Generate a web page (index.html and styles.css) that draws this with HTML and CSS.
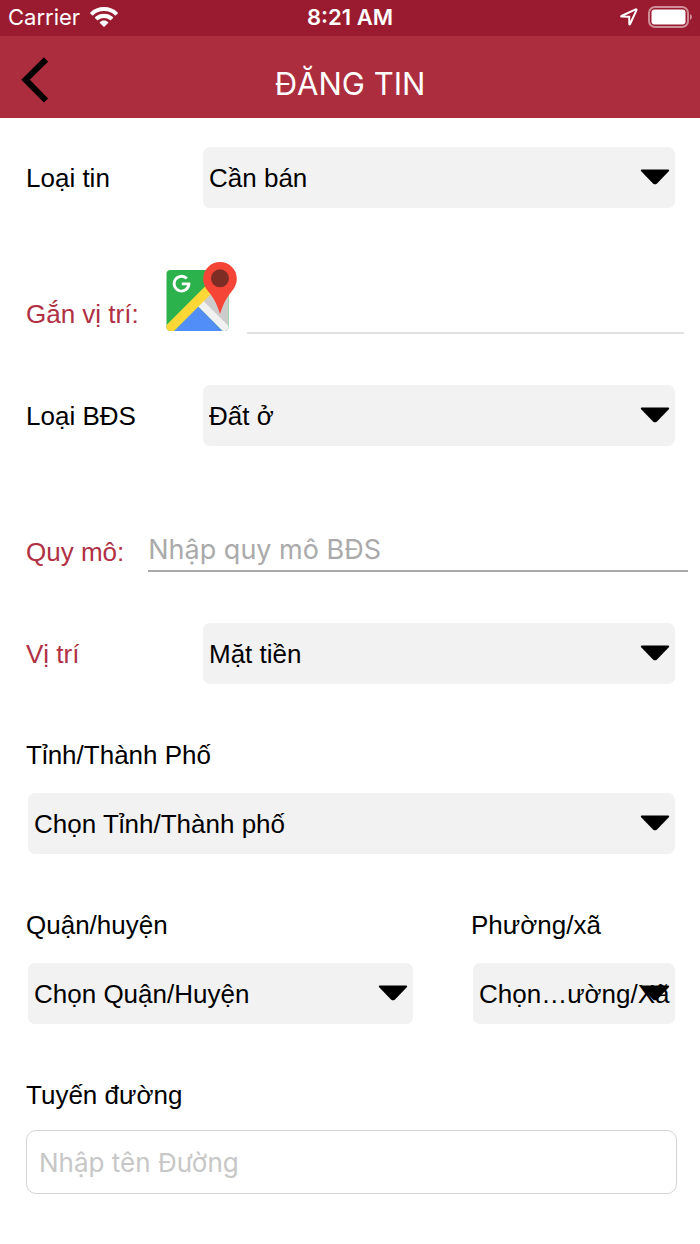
FILE: index.html
```html
<!DOCTYPE html>
<html lang="vi">
<head>
<meta charset="utf-8">
<meta name="viewport" content="width=device-width, initial-scale=1">
<title>Đăng tin</title>
<link rel="stylesheet" href="styles.css">
</head>
<body>
<svg class="defs" width="0" height="0" aria-hidden="true">
  <symbol id="caret" viewBox="0 0 30 16"><path d="M1.8 .5H28.2Q30 .8 28.6 2.6L17 14.4Q15 16.2 13 14.4L1.4 2.6Q0 .8 1.8 .5Z"/></symbol>
</svg>
<header>
  <div class="status">
    <div class="status-side">
      <span>Carrier</span>
      <svg class="wifi" viewBox="0 0 28 20" aria-hidden="true">
        <path d="M14 0C19.400 0 24.200 2 27.700 5.400Q28.200 6 27.700 6.500L25.900 8.200Q25.400 8.700 24.800 8.200C21.900 5.500 18.200 4.100 14 4.100S6.100 5.500 3.200 8.200Q2.600 8.700 2.100 8.200L.3 6.500Q-.2 6 .3 5.400C3.800 2 8.600 0 14 0Z"/>
        <path d="M14 6.800C17.400 6.800 20.500 8 22.900 10.100Q23.500 10.700 22.900 11.300L21 13.100Q20.500 13.500 19.900 13.100C18.300 11.700 16.300 10.900 14 10.900S9.700 11.700 8.100 13.100Q7.500 13.500 7 13.100L5.100 11.300Q4.500 10.700 5.100 10.100C7.500 8 10.600 6.800 14 6.800Z"/>
        <path d="M14 13.500C15.600 13.500 17 14.100 18.100 15Q18.600 15.500 18.100 16L14.600 19.400Q14 20 13.400 19.400L9.900 16Q9.400 15.500 9.900 15C11 14.100 12.400 13.500 14 13.500Z"/>
      </svg>
    </div>
    <div class="clock">8:21 AM</div>
    <div class="status-side status-end">
      <svg class="locate" viewBox="0 0 18 18" aria-hidden="true"><path d="M1.400 8L15.600 1.400Q16.800 1.200 16.400 2.300L10 16.200Q9.400 16.900 9.300 16L9.200 8.800L1.800 8.600Q.8 8.400 1.400 8Z"/></svg>
      <svg class="battery" viewBox="0 0 44 22" aria-hidden="true">
        <rect class="battery-shell" x="1" y="1" width="39" height="20" rx="6"/>
        <rect class="battery-fill" x="3.500" y="3.500" width="34" height="15" rx="3"/>
        <path class="battery-tip" d="M42 8Q44 9 44 11T42 14Z"/>
      </svg>
    </div>
  </div>
  <div class="nav">
    <button class="back" type="button" aria-label="Quay lại"><svg viewBox="0 0 28 46" aria-hidden="true"><path d="M25 2.500L4.500 22.700L25 43.500"/></svg></button>
    <h1>ĐĂNG TIN</h1>
  </div>
</header>
<main>
  <form>
    <div class="row">
      <label for="kind">Loại tin</label>
      <div class="picker"><select id="kind"><option>Cần bán</option></select><svg class="caret" aria-hidden="true"><use href="#caret"/></svg></div>
    </div>
    <div class="line-row line-row-place">
      <label class="accent" for="place">Gắn vị trí:</label>
      <svg class="map" viewBox="0 0 71 70" aria-hidden="true">
        <clipPath id="tile"><rect x=".5" y="8" width="62" height="61" rx="4"/></clipPath>
        <g clip-path="url(#tile)">
          <path fill="#2bb24c" d="M0 8H63V69H0Z"/>
          <path fill="#ccc" d="M62.500 14L34 42L62.500 69Z"/>
          <path fill="#f1f1f1" d="M31.500 44L37 38.500L63 64.500V69H56.500Z"/>
          <path fill="#518ef8" d="M7 70L31.700 44.300L57.400 70Z"/>
          <path fill="#ffd837" d="M0 63.500L44 19.500L50 27L7.500 69.500H0Z"/>
        </g>
        <path fill="none" stroke="#fff" stroke-width="2.800" d="M20.800 16.500A7.400 7.400 0 1 0 22.900 21.900H15.800"/>
        <path fill="#f44537" d="M54 0A16.800 16.800 0 0 1 70.800 16.800C70.800 23 67.500 27.500 64 31.500C59.500 37 56.500 44 54 52C51.500 44 48.500 37 44 31.500C40.500 27.500 37.200 23 37.200 16.800A16.800 16.800 0 0 1 54 0Z"/>
        <circle cx="54" cy="16.300" r="9" fill="#7e2d25"/>
      </svg>
      <input class="line-input line-input-light" id="place" type="text">
    </div>
    <div class="row">
      <label for="estate">Loại BĐS</label>
      <div class="picker"><select id="estate"><option>Đất ở</option></select><svg class="caret" aria-hidden="true"><use href="#caret"/></svg></div>
    </div>
    <div class="line-row line-row-size">
      <label class="accent" for="size">Quy mô:</label>
      <input class="line-input" id="size" type="text" placeholder="Nhập quy mô BĐS">
    </div>
    <div class="row">
      <label class="accent" for="front">Vị trí</label>
      <div class="picker"><select id="front"><option>Mặt tiền</option></select><svg class="caret" aria-hidden="true"><use href="#caret"/></svg></div>
    </div>
    <div class="field">
      <label for="city">Tỉnh/Thành Phố</label>
      <div class="picker"><select id="city"><option>Chọn Tỉnh/Thành phố</option></select><svg class="caret" aria-hidden="true"><use href="#caret"/></svg></div>
    </div>
    <div class="split">
      <div class="field">
        <label for="district">Quận/huyện</label>
        <div class="picker"><select id="district"><option>Chọn Quận/Huyện</option></select><svg class="caret" aria-hidden="true"><use href="#caret"/></svg></div>
      </div>
      <div class="field">
        <label for="ward">Phường/xã</label>
        <div class="picker"><select id="ward"><option>Chọn…ường/Xã</option></select><svg class="caret" aria-hidden="true"><use href="#caret"/></svg></div>
      </div>
    </div>
    <div class="field field-text">
      <label for="street">Tuyến đường</label>
      <input class="box-input" id="street" type="text" placeholder="Nhập tên Đường">
    </div>
  </form>
</main>
</body>
</html>
```
FILE: styles.css
```css
* { box-sizing: border-box; }

body {
  margin: 0;
  background: #fff;
  color: #000;
  font: 26px/32px "Liberation Sans", Arial, sans-serif;
}

.defs { position: absolute; }

.status {
  display: grid;
  grid-template-columns: 1fr auto 1fr;
  align-items: center;
  height: 36px;
  padding: 0 8px 2px;
  background: #9a1b2f;
  color: #fff;
  font: 22px/34px Inter, sans-serif;
}
.status-side { display: flex; align-items: center; gap: 10px; }
.status-end { justify-content: flex-end; }
.clock { font-weight: 600; }
.wifi { width: 28px; height: 20px; fill: #fff; }
.locate { width: 18px; height: 18px; fill: none; stroke: #fff; stroke-width: 2; }
.battery { width: 44px; height: 22px; }
.battery-shell { fill: none; stroke: #cf8f99; stroke-width: 2; }
.battery-fill { fill: #fff; }
.battery-tip { fill: #cf8f99; }

.nav {
  display: grid;
  grid-template-columns: 1fr auto 1fr;
  align-items: center;
  height: 82px;
  padding: 6px 21px 0;
  background: #ac2d3e;
  color: #fff;
}
.nav h1 { margin: 0; padding-top: 8px; font: 400 31px/40px Inter, sans-serif; }
.back {
  justify-self: start;
  display: flex;
  padding: 0;
  border: 0;
  background: none;
}
.back svg { width: 28px; height: 46px; fill: none; stroke: #000; stroke-width: 6; }

form { padding: 29px 0; }

.row {
  display: grid;
  grid-template-columns: 175px 1fr;
  align-items: center;
  padding: 0 23px 0 26px;
}

.accent { color: #b03044; }

.picker { position: relative; margin: 0 2px; }
.picker select {
  display: block;
  width: 100%;
  height: 61px;
  padding: 0 0 0 6px;
  border: 0;
  border-radius: 7px;
  appearance: none;
  background: #f2f2f2;
  color: #000;
  font: inherit;
}
.caret {
  position: absolute;
  top: 22px;
  right: 5px;
  width: 30px;
  height: 16px;
  pointer-events: none;
}

.line-row {
  display: flex;
  align-items: flex-end;
  height: 126px;
  margin-bottom: 51px;
}
.line-row label { padding-bottom: 4px; }
.line-row-place { padding: 0 16px 0 26px; }
.line-row-size { gap: 24px; padding: 0 12px 0 26px; }
.map { flex: none; width: 71px; height: 70px; margin: 0 10px 2px 27px; }
.line-input {
  flex: 1;
  min-width: 0;
  height: 46px;
  padding: 2px 0 0;
  border: 0;
  border-bottom: 2px solid #a9a9a9;
  background: none;
  font: 27px/34px Inter, sans-serif;
}
.line-input-light { border-bottom-color: #e2e2e2; }
.line-input::placeholder { color: #aaa; opacity: 1; }

.field { padding: 55px 23px 0 26px; }
.field label { display: block; margin-bottom: 22px; }
.field-text label { margin-bottom: 19px; }

.split {
  display: grid;
  grid-template-columns: 389fr 206fr;
  gap: 56px;
  padding: 0 23px 0 26px;
}
.split .field { min-width: 0; padding-left: 0; padding-right: 0; }

.box-input {
  display: block;
  width: 100%;
  height: 64px;
  padding: 0 12px;
  border: 1px solid #d4d4d4;
  border-radius: 10px;
  background: #fff;
  font: 26px/32px Inter, sans-serif;
}
.box-input::placeholder { color: #c7c7c7; opacity: 1; }
```
